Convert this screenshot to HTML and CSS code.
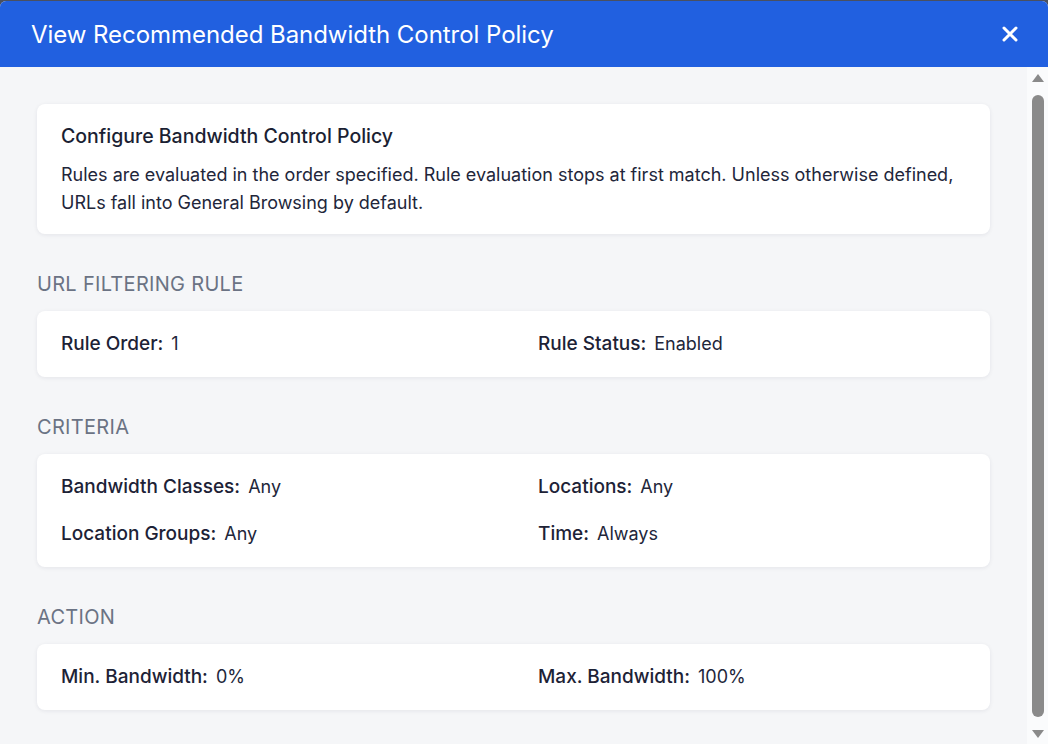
FILE: index.html
```html
<!DOCTYPE html>
<html lang="en">
<head>
    <meta charset="UTF-8">
    <meta name="viewport" content="width=device-width, initial-scale=1.0">
    <title>View Recommended Bandwidth Control Policy</title>
    <link rel="stylesheet" href="styles.css">
</head>
<body>

    <div class="modal">
        <div class="modal-header">
            <h1>View Recommended Bandwidth Control Policy</h1>
            <button class="close-btn" aria-label="Close">
                <svg width="18" height="18" viewBox="0 0 18 18">
                    <path d="M3 3 L15 15 M15 3 L3 15" stroke="#fff" stroke-width="3" stroke-linecap="round"/>
                </svg>
            </button>
        </div>

        <div class="modal-main">
            <div class="modal-body">
                <div class="card intro">
                    <h2>Configure Bandwidth Control Policy</h2>
                    <p>Rules are evaluated in the order specified. Rule evaluation stops at first match. Unless otherwise defined, URLs fall into General Browsing by default.</p>
                </div>

                <h3 class="section-title">URL Filtering Rule</h3>
                <div class="card fields">
                    <div class="field"><span class="label">Rule Order:</span><span class="value">1</span></div>
                    <div class="field"><span class="label">Rule Status:</span><span class="value">Enabled</span></div>
                </div>

                <h3 class="section-title">Criteria</h3>
                <div class="card fields">
                    <div class="field"><span class="label">Bandwidth Classes:</span><span class="value">Any</span></div>
                    <div class="field"><span class="label">Locations:</span><span class="value">Any</span></div>
                    <div class="field"><span class="label">Location Groups:</span><span class="value">Any</span></div>
                    <div class="field"><span class="label">Time:</span><span class="value">Always</span></div>
                </div>

                <h3 class="section-title">Action</h3>
                <div class="card fields">
                    <div class="field"><span class="label">Min. Bandwidth:</span><span class="value">0%</span></div>
                    <div class="field"><span class="label">Max. Bandwidth:</span><span class="value">100%</span></div>
                </div>
            </div>

            <!-- scrollbar -->
            <div class="scrollbar">
                <div class="arrow up"></div>
                <div class="thumb"></div>
                <div class="arrow down"></div>
            </div>
        </div>
    </div>

</body>
</html>
```

FILE: styles.css
```css
html, body {
    margin: 0;
    padding: 0;
    height: 100%;
    background-color: #4a5060;
}
body {
    font-family: Inter, "Noto Sans", Arial, sans-serif;
    color: #1b1f33;
    box-sizing: border-box;
    padding-top: 1px;
}
.modal {
    height: 100%;
    display: flex;
    flex-direction: column;
    border-radius: 6px 6px 0 0;
    overflow: hidden;
    background-color: #f5f6f8;
}
.modal-header {
    flex: none;
    height: 66px;
    display: flex;
    align-items: center;
    justify-content: space-between;
    padding: 0 27px 0 31px;
    background-color: #2160e0;
    color: white;
}
.modal-header h1 {
    margin: 0;
    font-size: 24px;
    font-weight: 400;
    letter-spacing: -0.05px;
}
.close-btn {
    background: none;
    border: none;
    padding: 0;
    width: 22px;
    height: 22px;
    display: flex;
    align-items: center;
    justify-content: center;
    cursor: pointer;
}
.modal-main {
    flex: 1;
    display: flex;
    min-height: 0;
}
.modal-body {
    flex: 1;
    overflow: hidden;
    padding: 37px 37px 0 37px;
}
.card {
    background: white;
    border-radius: 8px;
    box-shadow: 0 1px 4px rgba(20, 30, 60, 0.08);
}
.intro {
    padding: 19px 24px 17px 24px;
}
.intro h2 {
    margin: 0 0 12px 0;
    font-size: 19.5px;
    font-weight: 500;
    line-height: 26px;
}
.intro p {
    margin: 0;
    font-size: 18px;
    line-height: 28px;
    color: #22263a;
}
.section-title {
    margin: 38px 0 15px 0;
    font-size: 20px;
    font-weight: 400;
    line-height: 24px;
    text-transform: uppercase;
    letter-spacing: 0.3px;
    color: #6b7384;
}
.fields {
    display: grid;
    grid-template-columns: 477px 1fr;
    row-gap: 21px;
    padding: 20px 24px;
}
.field {
    display: flex;
    align-items: baseline;
    gap: 8px;
    line-height: 26px;
}
.label {
    font-size: 19px;
    font-weight: 500;
    color: #1d2236;
}
.value {
    font-size: 18px;
    color: #22263a;
}
.scrollbar {
    flex: none;
    width: 21px;
    display: flex;
    flex-direction: column;
    align-items: center;
    padding: 7px 0 6px 0;
    background-color: #fafbfc;
}
.arrow {
    width: 0;
    height: 0;
    border-left: 6px solid transparent;
    border-right: 6px solid transparent;
}
.arrow.up {
    border-bottom: 8px solid #8a8a8a;
}
.arrow.down {
    border-top: 8px solid #8a8a8a;
}
.thumb {
    flex: 1;
    width: 12px;
    margin: 13px 0 13px 0;
    border-radius: 6px;
    background-color: #8a8a8a;
}
```
